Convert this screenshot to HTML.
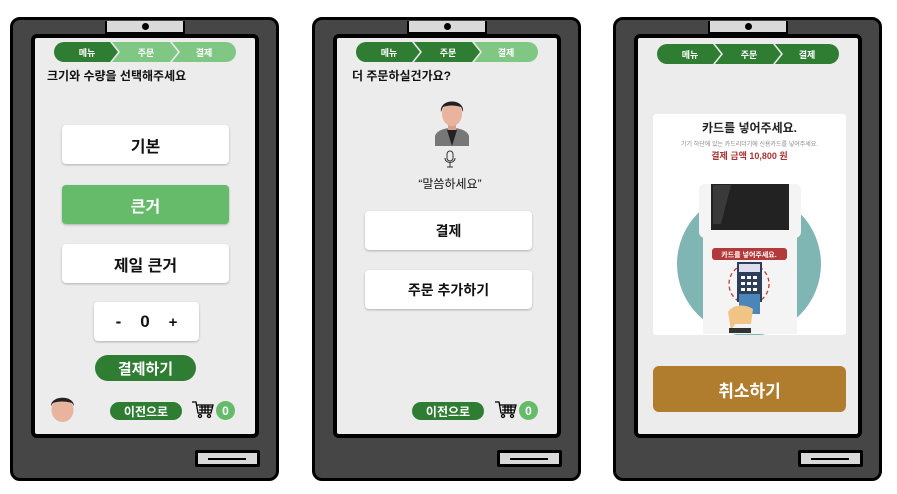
<!DOCTYPE html>
<html><head><meta charset="utf-8"><style>
*{margin:0;padding:0;box-sizing:border-box}
body{width:897px;height:494px;background:#fff;position:relative;overflow:hidden;font-family:"Liberation Sans","Noto Sans CJK KR",sans-serif}
.ph{position:absolute;top:17px;width:269px;height:464px;background:#464646;border:3px solid #000;border-radius:10px}
.notch{position:absolute;left:92px;top:1px;width:80px;height:13px;background:#d9d9d9;border:2px solid #000;border-top:none}
.notch:after{content:"";position:absolute;left:35px;top:2px;width:7px;height:7px;border-radius:50%;background:#000}
.scr{position:absolute;left:18px;top:14px;width:228px;height:404px;background:#ececec;border:4px solid #000;border-radius:6px}
.in{position:absolute;left:3px;top:0;width:220px;height:396px}
.slot{position:absolute;left:182px;top:430px;width:65px;height:17px;background:#d9d9d9;border:3px solid #000;border-radius:2px}
.slot:after{content:"";position:absolute;left:10px;top:5px;width:38px;height:1.5px;background:#000}
.a{position:absolute}
.btn{position:absolute;background:#fff;border-radius:4px;box-shadow:0 1px 2px rgba(0,0,0,.25);display:flex;align-items:center;justify-content:center;font-weight:bold;font-size:16px;color:#111}
.pill{position:absolute;background:#2e7d32;color:#fff;border-radius:14px;display:flex;align-items:center;justify-content:center;font-weight:bold}
.t{position:absolute;font-weight:bold;font-size:12px;color:#111;white-space:nowrap}
.cnt{position:absolute;width:19px;height:19px;border-radius:50%;background:#66bb6a;color:#fff;font-weight:bold;font-size:12px;display:flex;align-items:center;justify-content:center}
</style></head><body>

<div class="ph" style="left:10px">
<div class="notch"></div><div class="slot"></div>
<div class="scr"><div class="in">
<svg class="a" style="left:16px;top:4px" width="184" height="20" viewBox="0 0 184 20">
<path d="M10 0H56L64 10L56 20H10A10 10 0 0 1 10 0Z" fill="#2e7d32"/>
<path d="M58 0H116L124 10L116 20H58L66 10Z" fill="#81c784"/>
<path d="M118 0H172A10 10 0 0 1 172 20H118L126 10Z" fill="#81c784"/>
<text x="33" y="14" font-size="9" font-weight="bold" fill="#fff" text-anchor="middle" font-family="Liberation Sans,Noto Sans CJK KR,sans-serif">메뉴</text>
<text x="92" y="14" font-size="9" font-weight="bold" fill="#fff" text-anchor="middle" font-family="Liberation Sans,Noto Sans CJK KR,sans-serif">주문</text>
<text x="150" y="14" font-size="9" font-weight="bold" fill="#fff" text-anchor="middle" font-family="Liberation Sans,Noto Sans CJK KR,sans-serif">결제</text>
</svg>
<div class="t" style="left:9px;top:29px">크기와 수량을 선택해주세요</div>
<div class="btn" style="left:24px;top:87px;width:167px;height:39px">기본</div>
<div class="btn" style="left:24px;top:147px;width:167px;height:39px;background:#66bb6a;color:#fff">큰거</div>
<div class="btn" style="left:24px;top:206px;width:167px;height:39px">제일 큰거</div>
<div class="btn" style="left:56px;top:264px;width:105px;height:39px;font-size:17px"><span>-&nbsp;&nbsp;&nbsp;&nbsp;0&nbsp;&nbsp;&nbsp;&nbsp;<span style="font-size:15px">+</span></span></div>
<div class="pill" style="left:57px;top:317px;width:101px;height:26px;font-size:15px">결제하기</div>
<svg class="a" style="left:10px;top:355px" width="29" height="29" viewBox="0 0 29 29"><ellipse cx="14.5" cy="17" rx="11" ry="12" fill="#e8b49e"/><path d="M3 13C3 2 26 2 26 13L24 10C18 8 10 8 5 10Z" fill="#222"/></svg>
<div class="pill" style="left:72px;top:364px;width:72px;height:18px;font-size:12px">이전으로</div>
<svg class="a" style="left:154px;top:363px" width="22" height="18" viewBox="0 0 22 18" fill="none" stroke="#000" stroke-width="1.3"><path d="M0 1H4L6 12H19L21 4H5"/><path d="M7 6H20M7 9H19M10 4V12M13 4V12M16 4V12"/><circle cx="8" cy="15" r="1.5"/><circle cx="17" cy="15" r="1.5"/></svg>
<div class="cnt" style="left:178px;top:363px">0</div>
</div></div></div>

<div class="ph" style="left:312px">
<div class="notch"></div><div class="slot"></div>
<div class="scr"><div class="in">
<svg class="a" style="left:16px;top:4px" width="184" height="20" viewBox="0 0 184 20">
<path d="M10 0H56L64 10L56 20H10A10 10 0 0 1 10 0Z" fill="#2e7d32"/>
<path d="M58 0H116L124 10L116 20H58L66 10Z" fill="#2e7d32"/>
<path d="M118 0H172A10 10 0 0 1 172 20H118L126 10Z" fill="#81c784"/>
<text x="33" y="14" font-size="9" font-weight="bold" fill="#fff" text-anchor="middle" font-family="Liberation Sans,Noto Sans CJK KR,sans-serif">메뉴</text>
<text x="92" y="14" font-size="9" font-weight="bold" fill="#fff" text-anchor="middle" font-family="Liberation Sans,Noto Sans CJK KR,sans-serif">주문</text>
<text x="150" y="14" font-size="9" font-weight="bold" fill="#fff" text-anchor="middle" font-family="Liberation Sans,Noto Sans CJK KR,sans-serif">결제</text>
</svg>
<div class="t" style="left:12px;top:29px">더 주문하실건가요?</div>
<svg class="a" style="left:95px;top:58px" width="34" height="50" viewBox="0 0 34 50"><path d="M0 50V40C2 34 10 32 17 32C24 32 32 34 34 40V50Z" fill="#777"/><path d="M12 34L17 50L22 34Z" fill="#222"/><rect x="13" y="26" width="8" height="8" fill="#d9a08a"/><ellipse cx="17" cy="18" rx="10" ry="12" fill="#e8b49e"/><path d="M6 16C4 2 30 2 28 16L26 11C20 9 13 9 8 11Z" fill="#222"/></svg>
<svg class="a" style="left:104px;top:112px" width="12" height="18" viewBox="0 0 12 18" fill="none" stroke="#333" stroke-width="1"><rect x="3" y="1" width="6" height="10" rx="3"/><path d="M1 8C1 14 11 14 11 8M6 13V17M3 17H9"/></svg>
<div class="a" style="left:0;width:220px;top:137px;text-align:center;font-size:12px;color:#111">“말씀하세요”</div>
<div class="btn" style="left:25px;top:173px;width:167px;height:39px;font-size:14px">결제</div>
<div class="btn" style="left:25px;top:232px;width:167px;height:39px;font-size:14px">주문 추가하기</div>
<div class="pill" style="left:72px;top:364px;width:72px;height:18px;font-size:12px">이전으로</div>
<svg class="a" style="left:155px;top:363px" width="22" height="18" viewBox="0 0 22 18" fill="none" stroke="#000" stroke-width="1.3"><path d="M0 1H4L6 12H19L21 4H5"/><path d="M7 6H20M7 9H19M10 4V12M13 4V12M16 4V12"/><circle cx="8" cy="15" r="1.5"/><circle cx="17" cy="15" r="1.5"/></svg>
<div class="cnt" style="left:179px;top:363px">0</div>
</div></div></div>

<div class="ph" style="left:613px">
<div class="notch"></div><div class="slot"></div>
<div class="scr">
<svg class="a" style="left:19px;top:6px" width="184" height="20" viewBox="0 0 184 20">
<path d="M10 0H56L64 10L56 20H10A10 10 0 0 1 10 0Z" fill="#2e7d32"/>
<path d="M58 0H116L124 10L116 20H58L66 10Z" fill="#2e7d32"/>
<path d="M118 0H172A10 10 0 0 1 172 20H118L126 10Z" fill="#2e7d32"/>
<text x="33" y="14" font-size="9" font-weight="bold" fill="#fff" text-anchor="middle" font-family="Liberation Sans,Noto Sans CJK KR,sans-serif">메뉴</text>
<text x="92" y="14" font-size="9" font-weight="bold" fill="#fff" text-anchor="middle" font-family="Liberation Sans,Noto Sans CJK KR,sans-serif">주문</text>
<text x="150" y="14" font-size="9" font-weight="bold" fill="#fff" text-anchor="middle" font-family="Liberation Sans,Noto Sans CJK KR,sans-serif">결제</text>
</svg>
<div class="a" style="left:15px;top:76px;width:193px;height:221px;background:#fff;border-radius:3px;overflow:hidden">
<div class="a" style="left:0;width:193px;top:5px;text-align:center;font-weight:bold;font-size:12px;color:#222">카드를 넣어주세요.</div>
<div class="a" style="left:0;width:193px;top:25px;text-align:center;font-size:6px;color:#888">기기 하단에 있는 카드리더기에 신용카드를 넣어주세요.</div>
<div class="a" style="left:0;width:193px;top:35px;text-align:center;font-weight:bold;font-size:9px;color:#a33">결제 금액 10,800 원</div>
<svg class="a" style="left:0;top:50px" width="193" height="171" viewBox="0 0 193 171">
<circle cx="96" cy="100" r="72" fill="#7fb5b3"/>
<path d="M50 30H144V170H50Z" fill="#f4f4f4"/>
<rect x="46" y="20" width="102" height="54" rx="6" fill="#f4f4f4"/>
<path d="M58 20H136V66H58Z" fill="#222"/>
<path d="M60 21H78L68 60H60Z" fill="#3a3a3a"/>
<rect x="59" y="84" width="75" height="12" rx="3" fill="#b33a3a"/>
<text x="96" y="93" font-size="7" fill="#fff" text-anchor="middle" font-weight="bold" font-family="Liberation Sans,Noto Sans CJK KR,sans-serif">카드를 넣어주세요.</text>
<circle cx="96" cy="120" r="20" fill="none" stroke="#c33" stroke-width="1.3" stroke-dasharray="4 3"/>
<rect x="84" y="98" width="25" height="40" fill="#2c3e5a"/>
<rect x="86" y="100" width="21" height="8" fill="#dde"/>
<path d="M88 112h4v3h-4zM94 112h4v3h-4zM100 112h4v3h-4zM88 118h4v3h-4zM94 118h4v3h-4zM100 118h4v3h-4zM88 124h4v3h-4zM94 124h4v3h-4zM100 124h4v3h-4z" fill="#fff"/>
<rect x="86" y="130" width="21" height="20" fill="#4a86b8"/>
<path d="M75 148C80 140 92 140 100 145L98 160H82L78 166Z" fill="#f0c484"/>
<rect x="76" y="164" width="22" height="5" fill="#333"/>
</svg>
</div>
<div class="a" style="left:15px;top:328px;width:193px;height:46px;background:#b07d2e;border-radius:6px;color:#fff;font-weight:bold;font-size:17px;display:flex;align-items:center;justify-content:center">취소하기</div>
</div></div>

</body></html>
